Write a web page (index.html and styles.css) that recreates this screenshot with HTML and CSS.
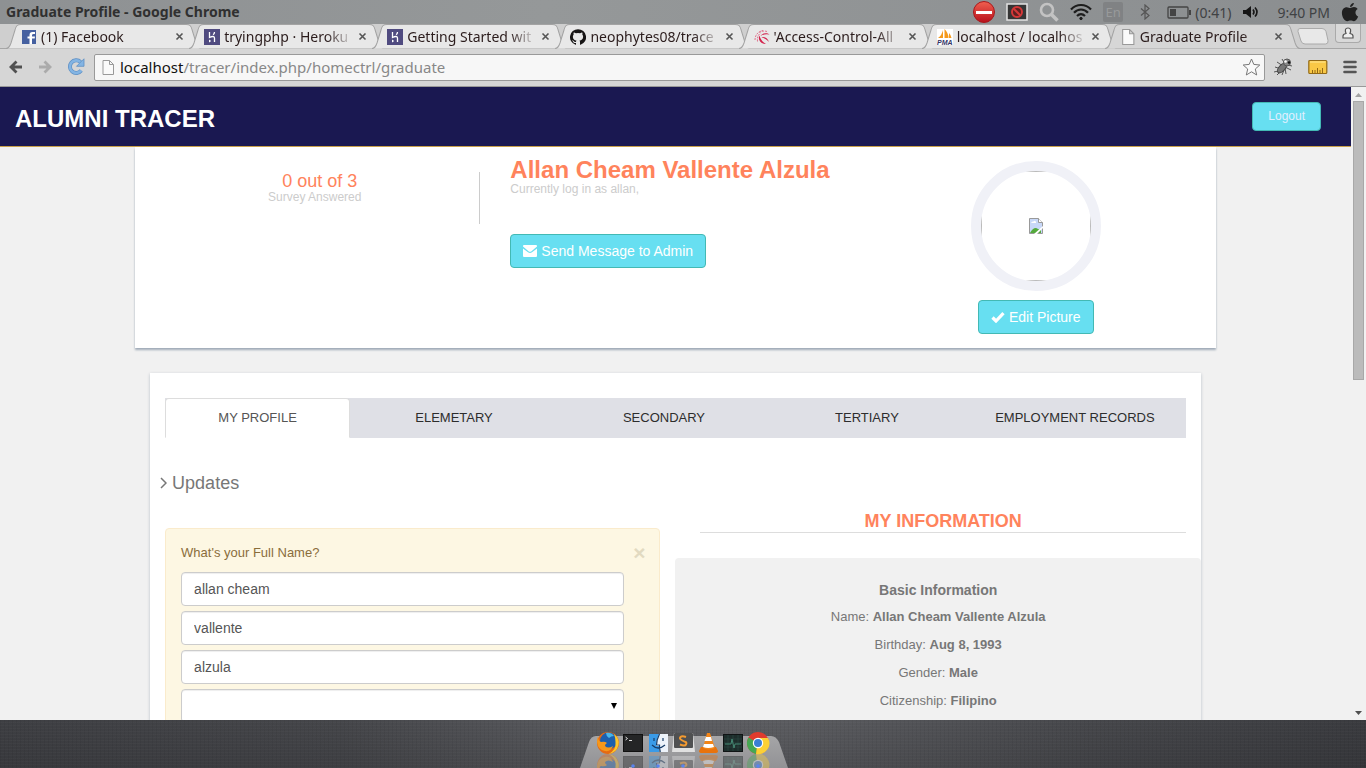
FILE: index.html
```html
<!DOCTYPE html>
<html lang="en">
<head>
<meta charset="utf-8">
<title>Graduate Profile</title>
<link rel="stylesheet" href="styles.css">
</head>
<body>
<svg class="defs" aria-hidden="true">
  <defs>
    <symbol id="tab-shape" viewBox="0 0 195 25" preserveAspectRatio="none">
      <path d="M0 24.500C3 24.500 4 22 5 19L9 6C10 2 11 .5 15 .5H180C184 .5 185 2 186 6L190 19C191 22 192 24.500 195 24.500" stroke="#a3a3a3"/>
    </symbol>
    <symbol id="close" viewBox="0 0 9 9"><path d="M1.500 1.500l6 6m0-6l-6 6" stroke="#555" stroke-width="1.600"/></symbol>
    <symbol id="heroku" viewBox="0 0 16 16"><path fill="#504b80" d="M0 0h16v16H0z"/><path d="M5.500 3v5.500c3-1.600 5-1.200 5 .5v4M10.500 3c0 1.300-.5 2-1.300 2.800" fill="none" stroke="#fff" stroke-width="1.300"/><path fill="#fff" d="M5 10.500l2.200 1.500L5 13.500z"/></symbol>
    <symbol id="page" viewBox="0 0 12 15"><path d="M1 .5h6.500l4 4v10H1zM7.500 .5v4h4" fill="#fafafa" stroke="#999"/></symbol>
  </defs>
</svg>

<header class="titlebar">
  <span class="window-title">Graduate Profile - Google Chrome</span>
  <div class="tray">
    <svg width="22" height="22" viewBox="0 0 22 22"><defs><linearGradient id="rg" x2="0" y2="1"><stop stop-color="#f06050"/><stop offset="1" stop-color="#b8101c"/></linearGradient></defs><circle cx="11" cy="11" r="10.500" fill="url(#rg)" stroke="#a8181c"/><path fill="#fff" d="M3 10h16v3H3z"/></svg>
    <svg width="22" height="18" viewBox="0 0 22 18"><path d="M1 1h20v16H1z" fill="#353535" stroke="#e4e4e4" stroke-width="1.500"/><circle cx="11" cy="9" r="5" fill="#5e2020" stroke="#d53838" stroke-width="2"/><path d="M7.500 5.500l7 7" stroke="#d53838" stroke-width="2"/></svg>
    <svg width="20" height="20" viewBox="0 0 20 20"><circle cx="8" cy="8" r="6" fill="none" stroke="#c3c3c3" stroke-width="2.600"/><path d="M12.500 12.500l6 6" stroke="#c3c3c3" stroke-width="3.500"/></svg>
    <svg width="22" height="18" viewBox="0 0 22 18" fill="none" stroke="#1d1d1d" stroke-width="2.200"><path d="M1 6.500C6.500 .5 15.500 .5 21 6.500M4 9.800c4-4.400 10-4.400 14 0M7 13c2.500-2.500 5.500-2.500 8 0"/><circle cx="11" cy="15.500" r="1.200" fill="#1d1d1d" stroke-width="1"/></svg>
    <span class="lang">En</span>
    <svg width="22" height="16" viewBox="0 0 22 16"><path d="M7 4.500l8 7-4 3.500V1l4 3.500-8 7" fill="none" stroke="#555" stroke-width="1.200"/></svg>
    <span class="battery"><svg width="25" height="13" viewBox="0 0 25 13"><rect x="1" y="1" width="20" height="11" rx="1" fill="none" stroke="#444" stroke-width="1.300"/><path d="M3 3h6v7H3zM22 4h2v5h-2z" fill="#444"/></svg>(0:41)</span>
    <svg width="24" height="14" viewBox="0 0 24 14"><path d="M1 5h3l5-4v12L4 9H1z" fill="#161616"/><path d="M11 4.500q2 2.500 0 5M13 2.500q4 4.500 0 9" fill="none" stroke="#161616" stroke-width="1.600"/></svg>
    <span class="clock">9:40 PM</span>
    <svg width="18" height="20" viewBox="0 0 18 20" fill="#202020"><path d="M13 1c-.3 2.300-2 4-4 4 0-2.300 1.800-3.900 4-4zM9.200 6c1 0 2-.9 3.800-.9 1.500 0 2.900.8 3.700 2-3.300 1.900-2.700 6.200.5 7.500-.9 2.400-2.500 4.700-4.300 4.700-1.200 0-1.800-.7-3.300-.7s-2.100.7-3.300.7C3.700 19.300.9 15 .9 11c0-3.700 2.300-5.800 4.800-5.800C7.300 5.200 8.400 6 9.200 6z"/></svg>
  </div>
</header>

<nav class="tabstrip" aria-label="Browser tabs">
  <div class="tabs">
    <div class="tab"><svg class="shape"><use href="#tab-shape"/></svg>
      <svg class="fav" viewBox="0 0 16 16"><path fill="#4560a0" d="M1 1h14v14H1z"/><path fill="#fff" d="M8.500 15V9.500h-2v-2h2V6q0-3 3-3H14v2h-1.500q-1.500 0-1.500 1.300v1.200h3l-.3 2H11V15z"/></svg>
      <span class="label">(1) Facebook</span><button aria-label="Close tab"><svg><use href="#close"/></svg></button></div>
    <div class="tab"><svg class="shape"><use href="#tab-shape"/></svg><svg class="fav"><use href="#heroku"/></svg>
      <span class="label">tryingphp · Heroku</span><button aria-label="Close tab"><svg><use href="#close"/></svg></button></div>
    <div class="tab"><svg class="shape"><use href="#tab-shape"/></svg><svg class="fav"><use href="#heroku"/></svg>
      <span class="label">Getting Started wit</span><button aria-label="Close tab"><svg><use href="#close"/></svg></button></div>
    <div class="tab"><svg class="shape"><use href="#tab-shape"/></svg>
      <svg class="fav" viewBox="0 0 16 16"><path fill="#171515" d="M8 .2a8 8 0 0 0-2.500 15.600c.4.100.5-.2.500-.4v-1.500c-2.200.5-2.700-1-2.700-1-.4-.9-.9-1.200-.9-1.200-.7-.5.100-.5.100-.5.800.1 1.200.8 1.200.8.700 1.300 1.900.9 2.300.7.100-.5.300-.9.500-1.100-1.800-.2-3.600-.9-3.600-4 0-.9.300-1.600.8-2.100-.1-.2-.4-1 .1-2.100 0 0 .7-.2 2.200.8a7.500 7.500 0 0 1 4 0c1.500-1 2.200-.8 2.200-.8.500 1.100.2 1.900.1 2.100.5.500.8 1.200.8 2.100 0 3.100-1.900 3.800-3.700 4 .3.300.6.800.6 1.500v2.300c0 .2.100.5.600.4A8 8 0 0 0 8 .2z"/></svg>
      <span class="label">neophytes08/trace</span><button aria-label="Close tab"><svg><use href="#close"/></svg></button></div>
    <div class="tab"><svg class="shape"><use href="#tab-shape"/></svg>
      <svg class="fav" viewBox="0 0 16 16" fill="#d3224c"><path d="M15.500 5.500C13 3.200 8 4 6.500 7q4-2.500 9-1.500zM5.500 6.500C3.500 10 6 15 12 15 8.500 13 6.500 10.500 5.500 6.500zM7.500 8c3.500-.5 6.500 1.500 7.500 5-2-2.500-4.500-3.500-7.500-5z"/><path d="M1 11C1 6 4 2.500 9 1.500M3.500 12.500c-.5-4 .5-6.500 3-8.500M13 2.500C10 1.500 7 2 4.500 4" fill="none" stroke="#e0748f" stroke-dasharray="2 1"/></svg>
      <span class="label">'Access-Control-All</span><button aria-label="Close tab"><svg><use href="#close"/></svg></button></div>
    <div class="tab"><svg class="shape"><use href="#tab-shape"/></svg>
      <svg class="fav" viewBox="0 0 16 16"><path fill="#fff" d="M0 0h16v16H0z"/><path fill="#f59a1c" d="M6 1v8H1q4-3 5-8zM7.500 0q4 4 4 9h-4zM12 4q2 2 2.500 5H12z"/><text x="0" y="16" class="pma">PMA</text></svg>
      <span class="label">localhost / localhos</span><button aria-label="Close tab"><svg><use href="#close"/></svg></button></div>
    <div class="tab active"><svg class="shape"><use href="#tab-shape"/></svg><svg class="fav"><use href="#page"/></svg>
      <span class="label">Graduate Profile</span><button aria-label="Close tab"><svg><use href="#close"/></svg></button></div>
  </div>
  <button class="new-tab" aria-label="New tab"><svg width="32" height="17" viewBox="0 0 32 17"><path d="M3 .5h22q3 0 4 3l2 9q.5 3.500-2.500 3.500H8q-3 0-4-3L1 3.500Q.5.500 3 .5z" fill="#e8e8e8" stroke="#aaa"/></svg></button>
  <button class="user" aria-label="User"><svg width="12" height="12" viewBox="0 0 12 12"><path d="M1 11V9q0-2 3-2.500Q2 1 6 1t2 5.500Q11 7 11 9v2z" fill="#eee" stroke="#555" stroke-width="1.200"/></svg></button>
</nav>

<div class="toolbar">
  <button aria-label="Back"><svg width="14" height="14" viewBox="0 0 14 14"><path d="M7.500 1.500L2 7l5.500 5.500M2.500 7H13" fill="none" stroke="#505050" stroke-width="2.800"/></svg></button>
  <button aria-label="Forward"><svg width="14" height="14" viewBox="0 0 14 14"><path d="M6.500 1.500L12 7l-5.500 5.500M11.500 7H1" fill="none" stroke="#ababab" stroke-width="2.800"/></svg></button>
  <button aria-label="Reload"><svg width="18" height="18" viewBox="0 0 18 18"><path d="M14.200 12.500A6.300 6.300 0 1 1 13.500 4" fill="none" stroke="#5d8fc4" stroke-width="4"/><path d="M14.200 12.500A6.300 6.300 0 1 1 13.500 4" fill="none" stroke="#83b4e3" stroke-width="2.600"/><path d="M17 .8v7.500H9.500z" fill="#83b4e3" stroke="#5d8fc4" stroke-width=".8"/></svg></button>
  <div class="omnibox">
    <svg width="12" height="15"><use href="#page"/></svg>
    <a class="url" href="#"><b>localhost</b>/tracer/index.php/homectrl/graduate</a>
    <svg width="19" height="18" viewBox="0 0 19 18"><path d="M9.500 1l2.300 5.400 6 .6-4.500 4 1.400 6-5.200-3.200L4.300 17l1.400-6L1.200 7l6-.6z" fill="#fafafa" stroke="#777" stroke-linejoin="round"/></svg>
  </div>
  <button aria-label="Bug tool"><svg width="20" height="20" viewBox="0 0 20 20"><g stroke="#555" stroke-width="1" fill="none"><path d="M2 10l6 2M1 15l8-2M4 18l5-5M9 18l2-5M13 17l-1-6M4 5l6 4M9 2l3 5M18 13l-6-3M12 2l2 3M19 9l-4-1"/></g><ellipse cx="9" cy="11" rx="3" ry="6" transform="rotate(42 9 11)" fill="#777" stroke="#444"/><circle cx="14" cy="5.500" r="3.500" fill="#888" stroke="#555"/><circle cx="12.500" cy="4.500" r="1.300" fill="#fff"/><circle cx="16" cy="5.500" r="1.300" fill="#111"/></svg></button>
  <button aria-label="Ruler"><svg width="20" height="16" viewBox="0 0 20 16"><rect x=".8" y="1.500" width="18" height="13" rx="1" fill="#f9c846" stroke="#936a16" stroke-width="1.200"/><path d="M2 3h15.500" stroke="#ffe795"/><path d="M4.500 14v-3M7 14v-3M9.500 14V9M12 14v-3M14.500 14v-5" stroke="#936a16"/></svg></button>
  <button aria-label="Menu"><svg width="14" height="14" viewBox="0 0 14 14"><path d="M1.500 2h11M1.500 7h11M1.500 12h11" stroke="#555" stroke-width="2.600" stroke-linecap="round"/></svg></button>
</div>

<div class="viewport">
  <main class="page">
    <header class="site-nav">
      <h1>ALUMNI TRACER</h1>
      <button class="btn small">Logout</button>
    </header>

    <section class="hero">
      <div class="survey"><div class="survey-box"><p class="count">&nbsp;&nbsp;0 out of 3</p><p class="muted">Survey Answered</p></div></div>
      <div class="who">
        <h2>Allan Cheam Vallente Alzula</h2>
        <p class="muted">Currently log in as allan,</p>
        <button class="btn"><svg width="14" height="12" viewBox="0 0 14 12" fill="#fff"><path d="M0 1q0-1 1-1h12q1 0 1 1v.6L8.500 6.200q-1.500 1.100-3 0L0 1.600zM0 3.500l5 3.800q2 1.300 4 0l5-3.800V11q0 1-1 1H1q-1 0-1-1z"/></svg>Send Message to Admin</button>
      </div>
      <div class="picture">
        <div class="avatar" role="img" aria-label="Profile picture"><div class="avatar-inner">
          <svg width="14" height="16" viewBox="0 0 14 16"><path d="M.5.5h9l4 4v11H.5z" fill="#c8d8f8" stroke="#999"/><path d="M2 5q1-2 2.500-1.500Q6 2 7 4v1z" fill="#fff"/><path d="M1 15q4-7 8-4l3 1v3z" fill="#54aa3c"/><path d="M9.500.5v4h4" fill="#fff" stroke="#999"/><path d="M8 16l6-6v-2L5 16z" fill="#fff"/></svg>
        </div></div>
        <button class="btn"><svg width="14" height="12" viewBox="0 0 14 12"><path d="M1.500 6.500L5 10l7.500-7.800" fill="none" stroke="#fff" stroke-width="3.200"/></svg>Edit Picture</button>
      </div>
    </section>

    <section class="card">
      <nav class="pills">
        <a class="current" href="#">MY PROFILE</a><a href="#">ELEMETARY</a><a href="#">SECONDARY</a><a href="#">TERTIARY</a><a href="#">EMPLOYMENT RECORDS</a>
      </nav>
      <h3 class="updates"><svg width="7" height="12" viewBox="0 0 7 12"><path d="M1 1l5 5-5 5" fill="none" stroke="#777" stroke-width="1.500"/></svg>Updates</h3>
      <div class="columns">
        <form class="alert">
          <div class="alert-head"><label for="first">What's your Full Name?</label><button type="button" aria-label="Dismiss">×</button></div>
          <input id="first" type="text" value="allan cheam">
          <input aria-label="Middle name" type="text" value="vallente">
          <input aria-label="Last name" type="text" value="alzula">
          <select aria-label="Suffix"><option></option></select>
        </form>
        <div class="info">
          <h3>MY INFORMATION</h3>
          <div class="panel">
            <h4>Basic Information</h4>
            <p>Name: <b>Allan Cheam Vallente Alzula</b></p>
            <p>Birthday: <b>Aug 8, 1993</b></p>
            <p>Gender: <b>Male</b></p>
            <p>Citizenship: <b>Filipino</b></p>
          </div>
        </div>
      </div>
    </section>
  </main>
  <div class="scrollbar" aria-hidden="true">
    <svg width="15" height="14" viewBox="0 0 15 14"><path d="M4 10h7L7.500 6z" fill="#a3a3a3"/></svg>
    <div class="thumb"></div>
    <svg width="15" height="13" viewBox="0 0 15 13"><path d="M4 4h7L7.500 8z" fill="#505050"/></svg>
  </div>
</div>

<footer class="desktop">
  <svg class="dock" width="208" height="38" viewBox="0 0 208 38" role="img" aria-label="Dock">
    <defs>
      <linearGradient id="shelf" x2="0" y2="1"><stop stop-color="#a5a5a7"/><stop offset="1" stop-color="#929295"/></linearGradient>
      <g id="icons">
        <g><circle cx="28" cy="13" r="11" fill="#e66a12"/><circle cx="28.500" cy="11" r="8.500" fill="#1d5fae"/><path d="M26 3q5-1 8 3-3 0-5 2-3-2-3-5z" fill="#49b5e8"/><path d="M18 6q0 5 3 6 4-1 6 1-2 1-2 3 3 3 8 0-2 6-8 5-7-1-8-9 0-3 1-6z" fill="#f5981c"/><path d="M34 4q6 5 4.500 11-2 8-10 9 8-4 7-12 0-4-1.500-8z" fill="#fbc72c"/></g>
        <g><rect x="43.500" y="4.500" width="19" height="17" fill="#242526" stroke="#111"/><path d="M45.500 7l2 1.500-2 1.500M49 10.500h3" fill="none" stroke="#ddd"/></g>
        <g><path d="M69 4h10v18H69z" fill="#3a9be8"/><path d="M79 4h9v18h-8q-1-3-1-6h-3q0-6 3-12z" fill="#edf3fa"/><path d="M72 15q6 6 13 0M74 8v3M83 8v3M79.500 4q-3 6-3 11h3q0 4 .8 7" fill="none" stroke="#163c68" stroke-width="1.200"/></g>
        <g><path d="M94 3h19l2 19H92z" fill="#e0e0e0"/><rect x="94" y="3" width="19" height="15" rx="1" fill="#505152"/><path d="M106 7q-4-1.500-5.500 0t1 3 4 2 .5 2.500-6 0" fill="none" stroke="#f39a30" stroke-width="2"/></g>
        <g><path d="M119 21l2-4h15l2 4q0 2-3 2h-13q-3 0-3-2z" fill="#e8730d"/><path d="M127 3h3l5 15q-6 3-12 0z" fill="#f28518"/><path d="M126 7h5l1 4h-7.500zM124 14h9l1 3q-6 2-11 0z" fill="#fff"/></g>
        <g><rect x="143.500" y="4.500" width="19" height="17" fill="#1d2d2b" stroke="#101415"/><path d="M144 9h18M144 13h18M144 17h18M148 5v16M153 5v16M158 5v16" stroke="#2c4944" stroke-width=".6"/><path d="M145 14h6l1-5 2 9 1-4h6" fill="none" stroke="#458873"/></g>
        <g><circle cx="178" cy="13" r="11" fill="#e03b2e"/><path d="M178 13l-9.500-5.500A11 11 0 0 0 176 24z" fill="#44a853"/><path d="M178 8h10a11 11 0 0 1-12 16z" fill="#fcd035"/><circle cx="178" cy="13" r="5.200" fill="#fff"/><circle cx="178" cy="13" r="4" fill="#3a7fd4"/></g>
      </g>
    </defs>
    <path d="M0 38L9 12Q11 6 16 6H191Q196 6 199 12L208 38z" fill="url(#shelf)"/>
    <use href="#icons" opacity=".38" transform="translate(0 48) scale(1 -1)"/>
    <use href="#icons"/>
    <g fill="#5a84f0"><circle cx="53" cy="36" r="1.800"/><circle cx="78" cy="36" r="1.800"/><circle cx="103" cy="36" r="1.800"/><circle cx="178" cy="36" r="1.800"/></g>
  </svg>
</footer>
</body>
</html>
```

FILE: styles.css
```css
* { box-sizing: border-box; }
body {
  margin: 0;
  height: 100vh;
  display: flex;
  flex-direction: column;
  overflow: hidden;
  background: #d6d6d6;
  font-family: "Liberation Sans", Arial, sans-serif;
}
h1, h2, h3, h4, p { margin: 0; }
button { font: inherit; padding: 0; border: 0; background: none; }
svg { display: block; flex: none; }
.defs { position: absolute; width: 0; height: 0; }

/* Window frame */
.titlebar, .tabstrip, .toolbar { font-family: "Noto Sans", sans-serif; flex: none; }
.titlebar {
  height: 24px;
  display: flex;
  align-items: center;
  justify-content: space-between;
  padding: 0 7px 0 6px;
  background: linear-gradient(90deg, #8e9193, #959899 40%, #8b8e90);
  color: #303030;
}
.window-title { font-size: 14px; font-weight: 700; line-height: 20px; }
.tray { display: flex; align-items: center; gap: 11px; font-size: 14px; color: #404244; }
.lang {
  width: 20px;
  height: 20px;
  line-height: 20px;
  text-align: center;
  font-size: 13px;
  border-radius: 2px;
  background: #808284;
  color: #989a9b;
}
.battery { display: flex; align-items: center; gap: 3px; }
.clock { white-space: nowrap; }

.tabstrip {
  height: 25px;
  display: flex;
  padding: 0 5px 0 12px;
  background: #cfcfcf;
  border-bottom: 1px solid #a6a6a6;
}
.tabs { flex: 1; display: flex; min-width: 0; }
.tab {
  position: relative;
  flex: 1;
  min-width: 0;
  height: 25px;
  display: flex;
  align-items: center;
  gap: 4px;
  padding: 0 11px 0 9px;
  font-size: 14px;
  color: #2b1c1c;
}
.shape { position: absolute; left: -6px; top: 0; width: calc(100% + 12px); height: 25px; fill: #e8e8e8; }
.active .shape { fill: #d6d6d6; }
.tab > :not(.shape) { position: relative; }
.fav { width: 16px; height: 16px; }
.label {
  flex: 1;
  overflow: hidden;
  white-space: nowrap;
  -webkit-mask-image: linear-gradient(90deg, #000 calc(100% - 28px), transparent);
  mask-image: linear-gradient(90deg, #000 calc(100% - 28px), transparent);
}
.tab button svg { width: 9px; height: 9px; }
.pma { font: italic bold 7px "Liberation Sans", sans-serif; fill: #333366; }
.new-tab { padding: 0 6px 0 3px; align-self: center; }
.user {
  width: 26px;
  height: 19px;
  display: flex;
  justify-content: center;
  align-items: center;
  border: 1px solid #aaa;
  border-top: 0;
  border-radius: 0 0 4px 4px;
  background: #d9d9d9;
}

.toolbar {
  height: 38px;
  display: flex;
  align-items: center;
  gap: 15px;
  padding: 0 9px 1px;
  background: #d6d6d6;
  border-bottom: 1px solid #999;
}
.omnibox {
  flex: 1;
  height: 27px;
  margin-left: -6px;
  margin-right: -7px;
  display: flex;
  align-items: center;
  gap: 6px;
  padding: 0 3px 0 7px;
  border: 1px solid #999;
  border-radius: 2px;
  background: #f7f7f7;
}
.url { flex: 1; font-size: 15px; line-height: 20px; color: #888; text-decoration: none; }
.url b { font-weight: 400; color: #111; }

/* Web page */
.viewport { flex: 1; min-height: 0; display: flex; background: #f1f1f1; }
.page { flex: 1; min-width: 0; overflow: hidden; color: #777; font-size: 13px; }
.scrollbar {
  width: 15px;
  display: flex;
  flex-direction: column;
  justify-content: space-between;
  background: #f1f1f1;
}
.thumb { height: 279px; margin: 0 2px auto; background: #bbb; border: 1px solid #a8a8a8; }

.site-nav {
  position: relative;
  height: 60px;
  display: flex;
  align-items: center;
  justify-content: space-between;
  padding: 0 30px 0 15px;
  background: #1a1851;
  border-bottom: 1px solid #c9a04a;
  color: #fff;
}
.site-nav h1 { font-size: 24px; line-height: 28px; padding-top: 4px; }
.btn {
  height: 34px;
  display: inline-flex;
  align-items: center;
  gap: 4px;
  padding: 0 12px;
  border: 1px solid #43b9b4;
  border-radius: 4px;
  background: #67dff1;
  color: #fff;
  font-size: 14px;
}
.btn.small { height: 29px; padding: 0 15px 2px; font-size: 12px; color: #e2f0ff; }

.hero {
  width: 80%;
  margin: 0 auto;
  height: 201px;
  display: grid;
  grid-template-columns: repeat(3, 1fr);
  background: #fff;
  box-shadow: 0 2px 2px #a0abb8;
}
.survey { padding: 25px 15px 0; text-align: center; }
.survey-box { height: 52px; border-right: 1px solid #ccc; }
.count { font-size: 18px; line-height: 19px; color: #ff835c; }
.muted { font-size: 12px; line-height: 13px; color: #ccc; }
.who { padding: 10px 15px 0; }
.who h2 { font-size: 24px; line-height: 26px; color: #ff835c; white-space: nowrap; }
.who .btn { margin-top: 38px; }
.picture { display: flex; flex-direction: column; align-items: center; gap: 9px; padding-top: 14px; }
.avatar { width: 130px; height: 130px; border: 10px solid #f0f1f7; border-radius: 50%; overflow: hidden; }
.avatar-inner { height: 110px; display: grid; place-items: center; border: 1px solid #bbb; }

.card {
  width: calc(80% - 30px);
  margin: 25px auto 0;
  padding-top: 25px;
  background: #fff;
  box-shadow: 0 1px 3px #b8bfc8;
}
.pills {
  margin: 0 15px;
  display: grid;
  grid-template-columns: 185fr 208fr 212fr 194fr 222fr;
  background: #dfe0e6;
  line-height: 38px;
  text-align: center;
}
.pills a { color: #2d2d2d; text-decoration: none; border: 1px solid transparent; }
.pills .current { color: #555; background: #fff; border-color: #ddd #ddd #fff; border-radius: 4px 4px 0 0; }
.updates {
  display: flex;
  align-items: center;
  gap: 5px;
  margin: 35px 10px 0;
  font-size: 18px;
  font-weight: 400;
  line-height: 20px;
}
.columns { display: grid; grid-template-columns: 1fr 1fr; margin-top: 18px; }
.alert {
  margin: 17px 15px 0;
  padding: 15px 35px 20px 15px;
  display: flex;
  flex-direction: column;
  gap: 5px;
  border: 1px solid #faebcc;
  border-radius: 4px;
  background: #fdf7e3;
}
.alert-head {
  display: flex;
  align-items: flex-start;
  justify-content: space-between;
  height: 23px;
  margin-right: -21px;
  line-height: 18px;
  color: #8a6d3b;
}
.alert-head button { font-size: 21px; font-weight: 700; line-height: 18px; color: #e2dac1; }
.alert input, .alert select {
  width: 100%;
  height: 34px;
  padding: 6px 12px;
  border: 1px solid #ccc;
  border-radius: 4px;
  background: #fff;
  box-shadow: inset 0 1px 1px #eee;
  font: 14px "Liberation Sans", Arial, sans-serif;
  color: #555;
}
.alert select {
  appearance: none;
  background: #fff url("data:image/svg+xml,%3Csvg xmlns='http://www.w3.org/2000/svg' width='6' height='6'%3E%3Cpath d='M0 0h6L3 6z'/%3E%3C/svg%3E") no-repeat right 6px center;
}
.info { text-align: center; }
.info h3 {
  margin: 0 15px 25px 25px;
  border-bottom: 1px solid #ddd;
  font-size: 18px;
  line-height: 21px;
  color: #ff835c;
}
.panel { padding: 22px 0 20px; min-height: 200px; border-radius: 4px; background: #f1f1f1; }
.panel h4 { font-size: 14px; line-height: 20px; margin-bottom: 8px; }
.panel p { line-height: 18px; margin-bottom: 10px; }

/* Desktop below the window */
.desktop {
  flex: none;
  height: 48px;
  display: flex;
  align-items: flex-end;
  justify-content: center;
  padding-left: 2px;
  background:
    repeating-linear-gradient(0deg, rgba(255,255,255,.02) 0 1px, transparent 1px 3px),
    repeating-linear-gradient(90deg, rgba(0,0,0,.05) 0 1px, transparent 1px 4px),
    linear-gradient(0deg, rgba(30,30,33,.2), transparent),
    linear-gradient(90deg, #3e3f43, #45464a 25%, #5d5e62 46%, #5b5c60 58%, #46474b 80%, #3a3b3f);
}
```
